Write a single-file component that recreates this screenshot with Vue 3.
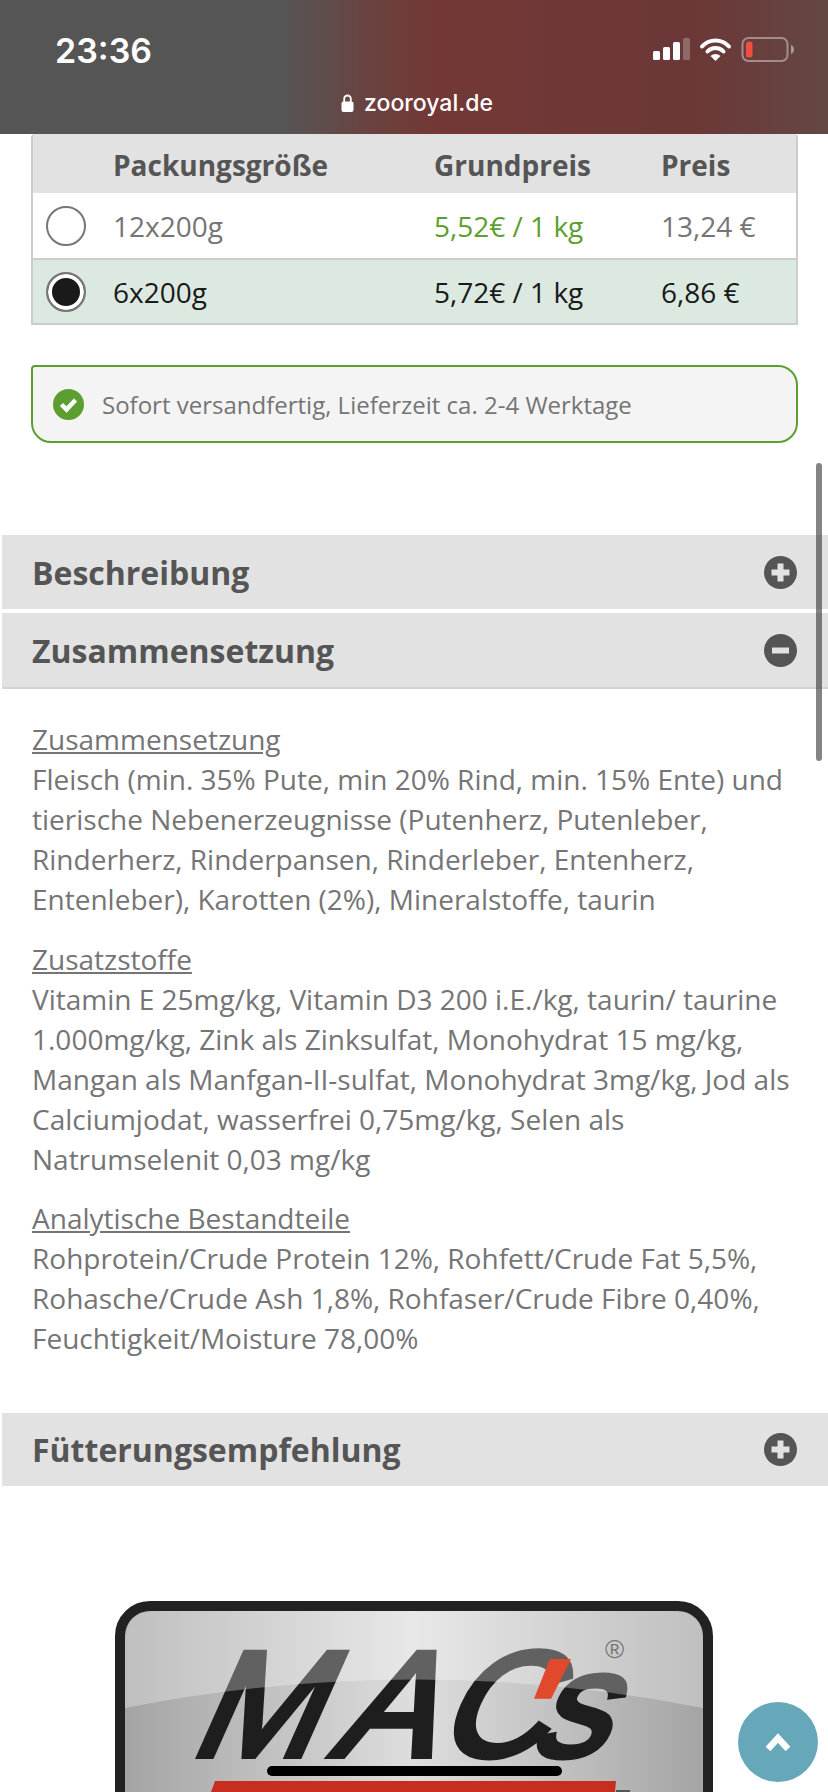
<template>
  <div class="page">
    <div class="status-bar">
      <div class="status-row">
        <span class="time">23:36</span>
        <svg class="status-icons" width="142" height="26" viewBox="0 0 142 26">
          <rect x="0" y="14" width="7" height="9" rx="1.5" fill="#fff" />
          <rect x="10" y="10" width="7" height="13" rx="1.5" fill="#fff" />
          <rect x="20" y="5" width="7" height="18" rx="1.5" fill="#fff" />
          <rect x="30" y="1" width="7" height="22" rx="1.5" fill="#fff" fill-opacity="0.25" />
          <path d="M49 9.5 a18 18 0 0 1 27 0" fill="none" stroke="#fff" stroke-width="4" stroke-linecap="round" />
          <path d="M54.5 14.5 a11 11 0 0 1 16 0" fill="none" stroke="#fff" stroke-width="4" stroke-linecap="round" />
          <path d="M57.5 19 L62.5 24 L67.5 19 a7 7 0 0 0 -10 0 z" fill="#fff" />
          <rect x="89.5" y="1" width="45" height="23" rx="6" fill="none" stroke="#fff" stroke-opacity="0.4" stroke-width="2" />
          <rect x="93" y="4.5" width="6.5" height="16" rx="2.5" fill="#ef4f3f" />
          <path d="M138 8 q3 1 3 4.5 t-3 4.5 z" fill="#fff" fill-opacity="0.45" />
        </svg>
      </div>
      <div class="url-row">
        <svg width="13" height="18" viewBox="0 0 13 18">
          <path d="M3.2 8 V4.8 a3.3 3.3 0 0 1 6.6 0 V8" fill="none" stroke="#fff" stroke-width="1.8" />
          <rect x="0.5" y="7.5" width="12" height="10.5" rx="2" fill="#fff" />
        </svg>
        <span>zooroyal.de</span>
      </div>
    </div>

    <div class="size-table">
      <div class="tr head">
        <span></span>
        <span>Packungsgröße</span>
        <span>Grundpreis</span>
        <span>Preis</span>
      </div>
      <div v-for="row in sizes" :key="row.size" :class="['tr', { selected: row.selected }]">
        <span :class="['radio', { on: row.selected }]"></span>
        <span>{{ row.size }}</span>
        <span :class="{ cheap: row.cheap }">{{ row.base }}</span>
        <span>{{ row.price }}</span>
      </div>
    </div>

    <div class="notice">
      <svg width="31" height="31" viewBox="0 0 31 31">
        <circle cx="15.5" cy="15.5" r="15.5" fill="#5c9f30" />
        <path d="M8.5 15.5 L13.5 20.5 L22.5 11" fill="none" stroke="#fff" stroke-width="4.5" />
      </svg>
      <span>Sofort versandfertig, Lieferzeit ca. 2-4 Werktage</span>
    </div>

    <div class="acc-head first">
      <span>Beschreibung</span>
      <svg width="33" height="33" viewBox="0 0 33 33">
        <circle cx="16.5" cy="16.5" r="16.5" fill="#555" />
        <path d="M16.5 7.5 V25.5 M7.5 16.5 H25.5" stroke="#e2e2e2" stroke-width="6" />
      </svg>
    </div>
    <div class="acc-head open">
      <span>Zusammensetzung</span>
      <svg width="33" height="33" viewBox="0 0 33 33">
        <circle cx="16.5" cy="16.5" r="16.5" fill="#555" />
        <path d="M8 16.5 H25" stroke="#e2e2e2" stroke-width="6" />
      </svg>
    </div>

    <div class="acc-body">
      <p v-for="block in blocks" :key="block.title">
        <u>{{ block.title }}</u>
        <template v-for="line in block.lines" :key="line"><br />{{ line }}</template>
      </p>
    </div>

    <div class="acc-head last">
      <span>Fütterungsempfehlung</span>
      <svg width="33" height="33" viewBox="0 0 33 33">
        <circle cx="16.5" cy="16.5" r="16.5" fill="#555" />
        <path d="M16.5 7.5 V25.5 M7.5 16.5 H25.5" stroke="#e2e2e2" stroke-width="6" />
      </svg>
    </div>

    <svg class="logo" width="598" height="191" viewBox="0 0 598 191">
      <defs>
        <linearGradient id="metal" x1="0" x2="1" y1="0" y2="0">
          <stop offset="0" stop-color="#a3a3a3" />
          <stop offset="0.5" stop-color="#dedede" />
          <stop offset="1" stop-color="#a3a3a3" />
        </linearGradient>
      </defs>
      <rect x="5" y="5" width="588" height="320" rx="30" fill="url(#metal)" stroke="#222" stroke-width="10" />
      <text class="logo-text" transform="translate(0 155) skewX(-24)">
        <tspan x="72" y="0" font-size="150">M</tspan>
        <tspan x="214" y="0" font-size="150">A</tspan>
        <tspan x="318" y="0" font-size="150">C</tspan>
        <tspan x="413" y="0" font-size="150">s</tspan>
      </text>
      <path d="M10 107 Q300 50 588 107 V40 Q588 10 558 10 H40 Q10 10 10 40 Z" fill="#fff" fill-opacity="0.3" />
      <text class="apos" transform="translate(0 155) skewX(-24)" x="383" y="13" font-size="160">'</text>
      <text x="490" y="57" class="reg">®</text>
      <path d="M100 180 H501 L500 191 H96 Z" fill="#c62e20" />
      <rect x="501" y="189" width="14" height="2" fill="#555" />
    </svg>

    <!-- overlays -->
    <div class="scrollbar"></div>
    <div class="to-top">
      <svg width="26" height="18" viewBox="0 0 26 18">
        <path d="M3 16 L13 5 L23 16" fill="none" stroke="#fff" stroke-width="6.5" />
      </svg>
    </div>
    <div class="home-bar"></div>
  </div>
</template>

<script setup>
const sizes = [
  { size: '12x200g', base: '5,52€ / 1 kg', price: '13,24 €', cheap: true },
  { size: '6x200g', base: '5,72€ / 1 kg', price: '6,86 €', selected: true }
]

const blocks = [
  {
    title: 'Zusammensetzung',
    lines: [
      'Fleisch (min. 35% Pute, min 20% Rind, min. 15% Ente) und',
      'tierische Nebenerzeugnisse (Putenherz, Putenleber,',
      'Rinderherz, Rinderpansen, Rinderleber, Entenherz,',
      'Entenleber), Karotten (2%), Mineralstoffe, taurin'
    ]
  },
  {
    title: 'Zusatzstoffe',
    lines: [
      'Vitamin E 25mg/kg, Vitamin D3 200 i.E./kg, taurin/ taurine',
      '1.000mg/kg, Zink als Zinksulfat, Monohydrat 15 mg/kg,',
      'Mangan als Manfgan-II-sulfat, Monohydrat 3mg/kg, Jod als',
      'Calciumjodat, wasserfrei 0,75mg/kg, Selen als',
      'Natrumselenit 0,03 mg/kg'
    ]
  },
  {
    title: 'Analytische Bestandteile',
    lines: [
      'Rohprotein/Crude Protein 12%, Rohfett/Crude Fat 5,5%,',
      'Rohasche/Crude Ash 1,8%, Rohfaser/Crude Fibre 0,40%,',
      'Feuchtigkeit/Moisture 78,00%'
    ]
  }
]
</script>

<style>
html, body { margin: 0; background: #fff; }
</style>

<style scoped>
.page { position: relative; width: 828px; height: 1792px; overflow: hidden; background: #fff; font-family: "Open Sans", "Liberation Sans", sans-serif; color: #757575; }

.status-bar { height: 134px; box-sizing: border-box; padding-top: 28px; background: linear-gradient(90deg, #555 0%, #565555 34%, #5e4e4c 39%, #694340 44%, #733836 53%, #6b3837 84%, #644744 100%); color: #fff; font-family: Inter, "Liberation Sans", sans-serif; }
.status-row { display: flex; justify-content: space-between; align-items: center; height: 44px; padding: 0 33px 0 55px; }
.time { font-size: 34px; font-weight: 600; }
.url-row { display: flex; align-items: center; justify-content: center; gap: 10px; height: 34px; margin-top: 14px; padding-left: 6px; font-size: 23px; font-weight: 500; }

.size-table { box-sizing: border-box; width: 767px; margin-left: 31px; border: 2px solid #ccc; border-width: 0 2px; border-radius: 4px 4px 0 0; font-size: 28px; }
.tr { display: grid; grid-template-columns: 80px 321px 227px 1fr; align-items: center; box-sizing: border-box; height: 67px; border-bottom: 2px solid #ccc; color: #757575; }
.tr.head { height: 59px; padding-top: 3px; border-bottom: none; background: #e2e2e2; color: #555; font-weight: 700; }
.tr.selected { height: 65px; background: #dce9e0; color: #1a1a1a; }
.cheap { color: #5c9f30; }
.radio { width: 40px; height: 40px; box-sizing: border-box; margin-left: 13px; border: 2px solid #777; border-radius: 50%; background: #fff; }
.radio.on { background: #1a1a1a; box-shadow: inset 0 0 0 4px #fff; }

.notice { display: flex; align-items: center; gap: 18px; box-sizing: border-box; width: 767px; height: 78px; margin: 40px 0 0 31px; padding-left: 20px; border: 2px solid #5c9f30; border-radius: 4px 20px 20px 20px; background: #f4f4f4; font-size: 24px; }

.acc-head { display: flex; justify-content: space-between; align-items: center; box-sizing: border-box; height: 74px; margin-left: 2px; padding: 0 31px 0 30px; background: #e2e2e2; color: #555; font-size: 32px; font-weight: 700; }
.acc-head.first { margin-top: 92px; }
.acc-head.open { height: 76px; margin-top: 4px; border-bottom: 2px solid #d4d4d4; }
.acc-head.last { height: 73px; margin-top: 55px; }

.acc-body { padding: 30px 30px 0 32px; font-size: 28px; line-height: 40px; }
.acc-body p { margin: 0 0 19.5px; white-space: nowrap; }

.logo { display: block; margin: 115px 0 0 115px; overflow: visible; }
.logo-text { font-family: "Liberation Sans", sans-serif; fill: #1e1e1e; stroke: #1e1e1e; stroke-width: 6px; }
.apos { font-family: "Liberation Sans", sans-serif; font-weight: 700; fill: #e0492c; }
.reg { font-family: "Liberation Sans", sans-serif; font-size: 26px; fill: #777; }

.scrollbar { position: absolute; left: 816px; top: 463px; width: 6px; height: 298px; border-radius: 3px; background: rgba(50, 50, 50, 0.6); }
.to-top { position: absolute; left: 738px; top: 1702px; display: flex; align-items: center; justify-content: center; width: 80px; height: 80px; border-radius: 50%; background: #66a8b9; }
.home-bar { position: absolute; left: 267px; top: 1766px; width: 295px; height: 10px; border-radius: 5px; background: #000; }
</style>
